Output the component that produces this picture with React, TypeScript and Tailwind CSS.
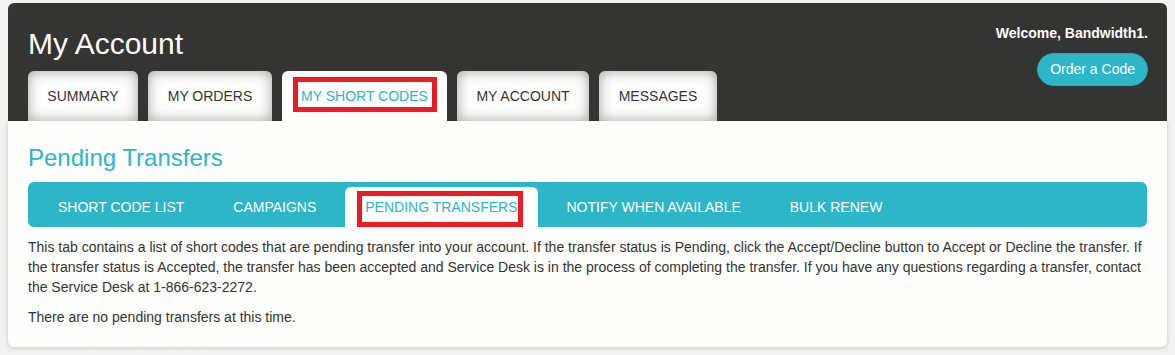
import React from "react";

const font = { fontFamily: '"Liberation Sans", Arial, Helvetica, sans-serif' };

function MainTab({ label, width, active, marked }: { label: string; width: string; active?: boolean; marked?: boolean }) {
  if (active) {
    return (
      <div className={`relative flex h-[50px] items-center justify-center rounded-t-[6px] bg-[#fefefc] text-[14px] text-[#2cb6c8] ${width}`}>
        {label}
        {marked && (
          <div className="pointer-events-none absolute left-[11px] top-[6px] h-[35px] w-[144px] border-[5px] border-[#ed1c24]" />
        )}
      </div>
    );
  }
  return (
    <div className={`flex h-[50px] items-center justify-center rounded-t-[6px] bg-white text-[14px] text-[#333333] shadow-[inset_0_0_14px_rgba(0,0,0,0.38)] ${width}`}>
      {label}
    </div>
  );
}

function SubTab({ label, active, marked }: { label: string; active?: boolean; marked?: boolean }) {
  if (active) {
    return (
      <div className="relative flex h-[40px] items-center rounded-t-[6px] bg-[#fefefc] px-5 text-[14px] text-[#2cb6c8]">
        {label}
        {marked && (
          <div className="pointer-events-none absolute left-[12px] top-[4px] h-[36px] w-[166px] border-[5px] border-[#ed1c24]" />
        )}
      </div>
    );
  }
  return <div className="flex h-[40px] items-center px-5 text-[14px] text-white">{label}</div>;
}

export default function App() {
  return (
    <div className="min-h-[355px] bg-[#f2f2f2] px-2 pt-[3px]" style={font}>
      <div className="flex justify-between rounded-t-[6px] bg-[#343433] pl-5 pr-[19px]">
        <div className="flex flex-col">
          <h1 className="pt-[23px] text-[30px] leading-[36px] text-white">My Account</h1>
          <div className="mt-[9px] flex gap-[10px]">
            <MainTab label="SUMMARY" width="w-[110px]" />
            <MainTab label="MY ORDERS" width="w-[124px]" />
            <MainTab label="MY SHORT CODES" width="w-[165px]" active marked />
            <MainTab label="MY ACCOUNT" width="w-[132px]" />
            <MainTab label="MESSAGES" width="w-[118px]" />
          </div>
        </div>
        <div className="flex flex-col items-end pt-[22px]">
          <div className="text-[14px] font-bold leading-[16px] text-white">Welcome, Bandwidth1.</div>
          <button className="mt-[12px] flex h-[33px] items-center rounded-full border border-[#2aabbd] bg-[#2cb6c8] px-[12px] text-[14px] text-white">
            Order a Code
          </button>
        </div>
      </div>
      <div className="rounded-b-[6px] bg-[#fefefc] px-5 pb-5 pt-[24px] shadow-[0_1px_4px_rgba(0,0,0,0.18)]">
        <h2 className="text-[24px] leading-[26px] text-[#2cb6c8]">Pending Transfers</h2>
        <div className="mt-[11px] flex h-[45px] items-end gap-[9px] rounded-[6px] bg-[#2cb6c8] pl-[10px]">
          <SubTab label="SHORT CODE LIST" />
          <SubTab label="CAMPAIGNS" />
          <SubTab label="PENDING TRANSFERS" active marked />
          <SubTab label="NOTIFY WHEN AVAILABLE" />
          <SubTab label="BULK RENEW" />
        </div>
        <p className="mt-[10px] text-[14px] leading-[20px] text-[#333333]">
          This tab contains a list of short codes that are pending transfer into your account. If the transfer status is
          Pending, click the Accept/Decline button to Accept or Decline the transfer. If the transfer status is Accepted,
          the transfer has been accepted and Service Desk is in the process of completing the transfer. If you have any
          questions regarding a transfer, contact the Service Desk at 1-866-623-2272.
        </p>
        <p className="mt-[10px] text-[14px] leading-[20px] text-[#333333]">There are no pending transfers at this time.</p>
      </div>
    </div>
  );
}
